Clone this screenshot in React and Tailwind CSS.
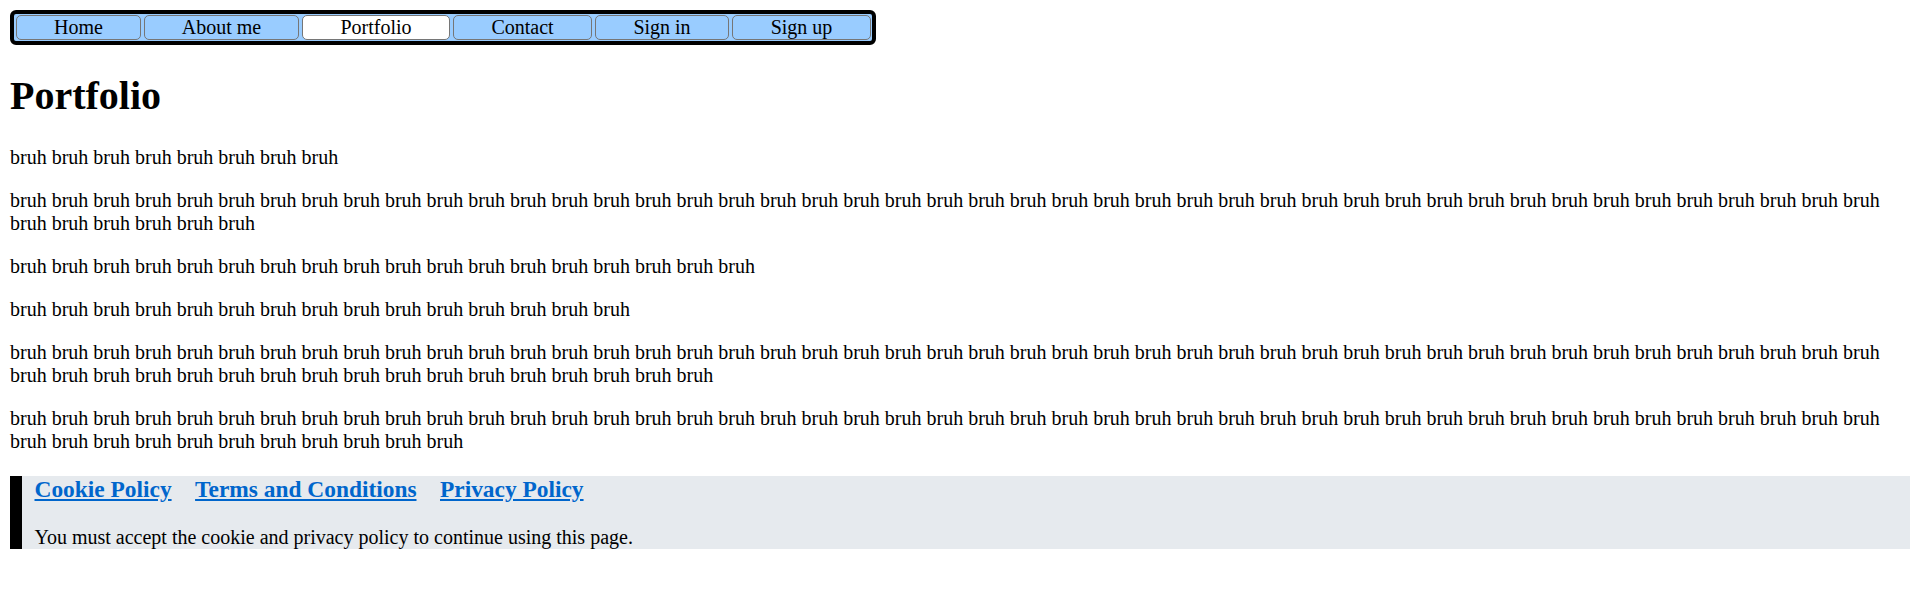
const navItems = [
  { label: 'Home', width: 'w-[125px]' },
  { label: 'About me', width: 'w-[155px]' },
  { label: 'Portfolio', width: 'w-[148px]', active: true },
  { label: 'Contact', width: 'w-[139px]' },
  { label: 'Sign in', width: 'w-[134px]' },
  { label: 'Sign up', width: 'w-[139px]' },
];

// number of "bruh"s in each paragraph
const paragraphs = [8, 51, 18, 15, 62, 56];

const bruh = (n) => Array(n).fill('bruh').join(' ');

export default function App() {
  return (
    <div className="min-h-screen bg-white px-[10px] pt-[10px] font-['Liberation_Serif',serif] text-[20px] leading-[23px] text-black">
      <nav className="flex w-fit gap-[3px] rounded-[6px] border-4 border-black bg-[#99ccff] py-px pl-[2px] pr-px">
        {navItems.map((item) => (
          <a
            key={item.label}
            href="#"
            className={`${item.width} ${
              item.active ? 'bg-white' : 'bg-[#99ccff]'
            } rounded-[5px] border border-[#767676] text-center text-black`}
          >
            {item.label}
          </a>
        ))}
      </nav>

      <h1 className="mt-[28px] text-[40px] font-bold leading-[46px]">Portfolio</h1>

      <div className="mt-[27px] flex flex-col gap-[20px]">
        {paragraphs.map((n, i) => (
          <p key={i}>{bruh(n)}</p>
        ))}
      </div>

      <footer className="mt-[22.5px] border-l-[12.5px] border-black bg-[#e6eaee] pl-[12.5px]">
        <h3 className="flex gap-[23.5px] text-[23.4px] font-bold leading-[27px]">
          <a href="#" className="text-[#0066cc] underline">Cookie Policy</a>
          <a href="#" className="text-[#0066cc] underline">Terms and Conditions</a>
          <a href="#" className="text-[#0066cc] underline">Privacy Policy</a>
        </h3>
        <p className="mt-[23.4px]">You must accept the cookie and privacy policy to continue using this page.</p>
      </footer>
    </div>
  );
}
